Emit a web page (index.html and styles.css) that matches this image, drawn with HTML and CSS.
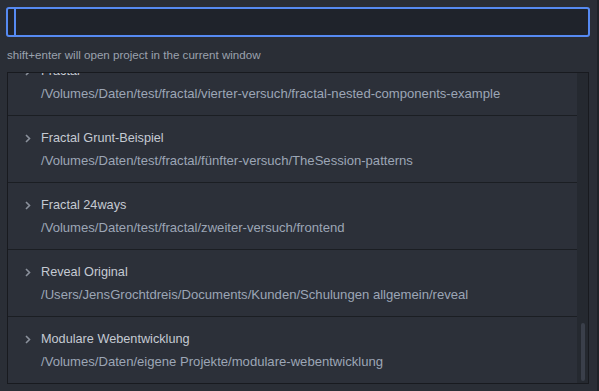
FILE: index.html
```html
<!DOCTYPE html>
<html>
<head>
<meta charset="utf-8">
<link rel="stylesheet" href="styles.css">
</head>
<body>
<div class="modal">
  <div class="input"><span class="caret"></span></div>
  <div class="hint">shift+enter will open project in the current window</div>
  <div class="list">
    <div class="items">
      <div class="scroller">
        <div class="item">
          <div class="title"><svg class="chev" width="6" height="9" viewBox="0 0 6 9"><path d="M1 1 L4.5 4.5 L1 8" fill="none" stroke="currentColor" stroke-width="1.6"/></svg>Fractal</div>
          <div class="path">/Volumes/Daten/test/fractal/vierter-versuch/fractal-nested-components-example</div>
        </div>
        <div class="item">
          <div class="title"><svg class="chev" width="6" height="9" viewBox="0 0 6 9"><path d="M1 1 L4.5 4.5 L1 8" fill="none" stroke="currentColor" stroke-width="1.6"/></svg>Fractal Grunt-Beispiel</div>
          <div class="path">/Volumes/Daten/test/fractal/fünfter-versuch/TheSession-patterns</div>
        </div>
        <div class="item">
          <div class="title"><svg class="chev" width="6" height="9" viewBox="0 0 6 9"><path d="M1 1 L4.5 4.5 L1 8" fill="none" stroke="currentColor" stroke-width="1.6"/></svg>Fractal 24ways</div>
          <div class="path">/Volumes/Daten/test/fractal/zweiter-versuch/frontend</div>
        </div>
        <div class="item">
          <div class="title"><svg class="chev" width="6" height="9" viewBox="0 0 6 9"><path d="M1 1 L4.5 4.5 L1 8" fill="none" stroke="currentColor" stroke-width="1.6"/></svg>Reveal Original</div>
          <div class="path">/Users/JensGrochtdreis/Documents/Kunden/Schulungen allgemein/reveal</div>
        </div>
        <div class="item">
          <div class="title"><svg class="chev" width="6" height="9" viewBox="0 0 6 9"><path d="M1 1 L4.5 4.5 L1 8" fill="none" stroke="currentColor" stroke-width="1.6"/></svg>Modulare Webentwicklung</div>
          <div class="path">/Volumes/Daten/eigene Projekte/modulare-webentwicklung</div>
        </div>
      </div>
    </div>
    <div class="track"><div class="thumb"></div></div>
  </div>
</div>
</body>
</html>
```
FILE: styles.css
```css
html, body {
  margin: 0;
  padding: 0;
  background: #1f2228;
  font-family: "Liberation Sans", Arial, sans-serif;
}
.modal {
  width: 597px;
  height: 391px;
  background: #2a2e36;
  box-sizing: border-box;
  padding: 7px 0 0 6px;
  overflow: hidden;
}
.input {
  width: 584px;
  height: 30px;
  box-sizing: border-box;
  border: 2px solid #568af2;
  border-radius: 3px;
  background: #1f232b;
  padding: 0 0 0 6px;
  display: flex;
  align-items: stretch;
}
.caret {
  width: 2px;
  background: #568af2;
}
.hint {
  font-size: 11.6px;
  color: #9ba2ae;
  margin: 11px 0 0 1px;
  height: 13px;
  line-height: 13px;
}
.list {
  margin: 11px 0 0 1px;
  width: 582px;
  height: 312px;
  box-sizing: border-box;
  border: 1px solid #181a1f;
  display: flex;
  background: #2c3039;
}
.items {
  flex: 1;
  overflow: hidden;
}
.scroller {
  margin-top: -24px;
}
.item {
  height: 66px;
  border-bottom: 1px solid #1b1e23;
  box-sizing: content-box;
  padding-left: 33px;
}
.title {
  font-size: 12.7px;
  color: #c5cad3;
  height: 15px;
  line-height: 15px;
  padding-top: 15px;
  position: relative;
}
.chev {
  position: absolute;
  left: -16px;
  top: 18px;
  color: #8b919c;
}
.path {
  font-size: 13.1px;
  color: #9ca6b6;
  margin-top: 7px;
  height: 15px;
  line-height: 15px;
}
.track {
  width: 11px;
  background: #252930;
  display: flex;
  flex-direction: column;
  justify-content: flex-end;
  box-sizing: border-box;
  padding: 0 3px 2px 4px;
}
.thumb {
  height: 58px;
  background: #3a3f4a;
  border-radius: 3px;
}
```
